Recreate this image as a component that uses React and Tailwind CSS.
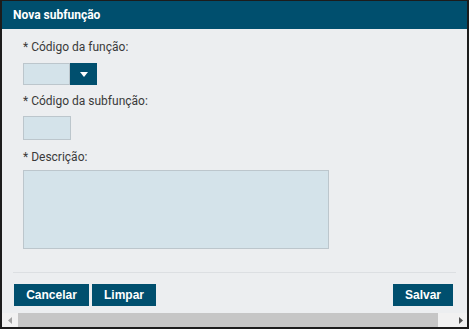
export default function App() {
  return (
    <div className="w-[469px] h-[329px] bg-[#1c1c1c] pt-px pl-[2px] pr-[2px] pb-[2px] overflow-hidden" style={{ fontFamily: "Roboto, 'Liberation Sans', sans-serif" }}>
      <div className="w-full h-full flex flex-col bg-[#eceef0]">
        <div className="h-[28px] shrink-0 bg-[#004f6e] flex items-center pl-[11px] text-white font-bold text-[12px]">
          Nova subfunção
        </div>
        <div className="flex-1 flex flex-col pl-[21px] pt-[11px]">
          <div className="h-[14px] leading-[14px] text-[12px] text-[#3a3a3a]">* Código da função:</div>
          <div className="mt-[9px] flex h-[22px]">
            <div className="w-[47px] h-full bg-[#d4e3ea] border border-[#bcc6cc]"></div>
            <div className="w-[27px] h-full bg-[#004f6e] flex items-center justify-center">
              <svg width="8" height="5" viewBox="0 0 8 5"><path d="M0 0H8L4 5Z" fill="#fff" /></svg>
            </div>
          </div>
          <div className="mt-[9px] h-[14px] leading-[14px] text-[12px] text-[#3a3a3a]">* Código da subfunção:</div>
          <div className="mt-[8px] w-[48px] h-[24px] bg-[#d4e3ea] border border-[#bcc6cc]"></div>
          <div className="mt-[10px] h-[14px] leading-[14px] text-[12px] text-[#3a3a3a]">* Descrição:</div>
          <div className="mt-[6px] w-[306px] h-[79px] bg-[#d4e3ea] border border-[#bcc6cc]"></div>
        </div>
        <div className="mx-[11px] h-px bg-[#dcdfe2]"></div>
        <div className="flex items-center justify-between pl-[12px] pr-[14px] pt-[11px] pb-[7px]">
          <div className="flex gap-[3px]" style={{ fontFamily: "'Liberation Sans', Arial, sans-serif" }}>
            <div className="w-[75px] h-[22px] bg-[#004f6e] text-white font-bold text-[12px] flex items-center justify-center">Cancelar</div>
            <div className="w-[64px] h-[22px] bg-[#004f6e] text-white font-bold text-[12px] flex items-center justify-center">Limpar</div>
          </div>
          <div className="w-[60px] h-[22px] bg-[#004f6e] text-white font-bold text-[12px] flex items-center justify-center" style={{ fontFamily: "'Liberation Sans', Arial, sans-serif" }}>Salvar</div>
        </div>
        <div className="h-[14px] flex items-center bg-[#f1f1f1]">
          <div className="w-[16px] flex items-center justify-center">
            <svg width="4" height="7" viewBox="0 0 4 7"><path d="M4 0V7L0 3.5Z" fill="#a3a3a3" /></svg>
          </div>
          <div className="w-[420px] h-full bg-[#c6c6c6]"></div>
          <div className="flex-1 flex items-center justify-end pr-[4px]">
            <svg width="4" height="7" viewBox="0 0 4 7"><path d="M0 0V7L4 3.5Z" fill="#505050" /></svg>
          </div>
        </div>
      </div>
    </div>
  );
}
